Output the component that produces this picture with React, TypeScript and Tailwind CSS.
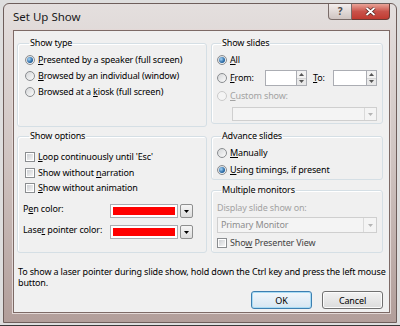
import React from 'react';

// Set Up Show dialog (Windows 7 style)

const Arrow = ({ color = '#000' }: { color?: string }) => (
  <svg width="5" height="3" viewBox="0 0 5 3">
    <path d="M0 0h5L2.5 3z" fill={color} />
  </svg>
);

const U = ({ children }: { children: React.ReactNode }) => <span className="underline underline-offset-1">{children}</span>;

const Radio = ({ checked, disabled, children }: { checked?: boolean; disabled?: boolean; children: React.ReactNode }) => (
  <div className={`flex items-center gap-[3px] ${disabled ? 'text-[#a3a3a3]' : 'text-black'}`}>
    <div
      className={`w-[10px] h-[10px] rounded-full border flex items-center justify-center ${disabled ? 'border-[#cacaca] bg-[#f4f4f4]' : 'border-[#8a8d90] bg-gradient-to-br from-[#d4d6d8] to-[#fbfbfb]'}`}
    >
      {checked && <div className="w-[6px] h-[6px] rounded-full bg-[radial-gradient(circle_at_35%_35%,#a8d6f7,#2a6aa6_60%,#174a7c)]" />}
    </div>
    <span>{children}</span>
  </div>
);

const Checkbox = ({ children }: { children: React.ReactNode }) => (
  <div className="flex items-center gap-[3px]">
    <div className="w-[10px] h-[10px] border border-[#8a8d90] bg-white p-[1px]">
      <div className="w-full h-full bg-gradient-to-br from-[#cdd0d4] to-[#f5f5f5]" />
    </div>
    <span>{children}</span>
  </div>
);

const Group = ({ title, className, children }: { title: string; className: string; children: React.ReactNode }) => (
  <fieldset className={`border border-[#d5dfe5] rounded-[3px] shadow-[inset_1px_1px_0_#fff] ${className}`}>
    <legend className="ml-[4px] px-[1px] leading-[12px]">{title}</legend>
    {children}
  </fieldset>
);

const Spin = ({ w }: { w: string }) => (
  <div className="flex h-[16px]">
    <div className={`${w} h-full bg-white border border-[#abadb3]`} />
    <div className="w-[10px] h-full border border-l-0 border-[#abadb3] flex flex-col">
      <div className="flex-1 flex items-center justify-center bg-[#f2f2f2] border-b border-[#d6d6d6]">
        <svg width="5" height="3" viewBox="0 0 5 3"><path d="M0 3h5L2.5 0z" fill="#555" /></svg>
      </div>
      <div className="flex-1 flex items-center justify-center bg-[#e8e8e8]">
        <Arrow color="#555" />
      </div>
    </div>
  </div>
);

const ColorPick = () => (
  <div className="flex gap-[2px] h-[14px]">
    <div className="w-[68px] h-full bg-white border border-[#abadb3] p-[2px]">
      <div className="w-full h-full bg-[#ff0000]" />
    </div>
    <div className="w-[13px] h-full border border-[#8e8f8f] rounded-[2px] bg-gradient-to-b from-[#f6f6f6] to-[#dcdcdc] flex items-center justify-center">
      <Arrow />
    </div>
  </div>
);

export default function App() {
  return (
    <div className="w-[400px] h-[326px] bg-[#dedede] pt-[3px] pl-[3px] font-['Noto_Sans',sans-serif] text-[9px] tracking-[-0.15px] text-black border-b border-[#3a3a3a]">
      <div className="w-[394px] h-[320px] rounded-t-[6px] border border-[#6e5e5b] bg-gradient-to-b from-[#e4dfde] via-[#cfc3c0] to-[#b29e9a] flex flex-col pl-[9px] pr-[6px] pb-[9px]">
        {/* title bar */}
        <div className="h-[26px] shrink-0 flex items-start justify-between">
          <div className="pt-[6px] text-[11.5px] tracking-normal leading-[14px] text-[#1a1a1a]">Set Up Show</div>
          <div className="flex">
            <div className="w-[24px] h-[16px] rounded-bl-[4px] border border-t-0 border-[#7a6c69] bg-gradient-to-b from-[#f3eeed] to-[#cfc4c1] flex items-center justify-center text-[10px] font-bold text-[#4a4a4a]">
              ?
            </div>
            <div className="w-[38px] h-[16px] rounded-br-[4px] border border-t-0 border-l-0 border-[#6b3b35] bg-gradient-to-b from-[#e8a397] via-[#c9524a] to-[#c03a30] flex items-center justify-center">
              <svg width="11" height="9" viewBox="0 0 11 9">
                <path d="M1.5 1l8 7M9.5 1l-8 7" stroke="#4a1d18" strokeWidth="3.2" />
                <path d="M1.5 1l8 7M9.5 1l-8 7" stroke="#fff" strokeWidth="1.8" />
              </svg>
            </div>
          </div>
        </div>

        {/* client area */}
        <div className="flex-1 min-h-0 bg-[#f0f0f0] border border-[#7d6a66] shadow-[0_0_0_1px_#e3d8d6] pl-[3px] pr-[6px] pt-[6px] flex flex-col">
          <div className="flex gap-[4px]">
            <Group title="Show type" className="w-[190px] h-[90px] pl-[7px]">
              <div className="pt-[3px] flex flex-col">
                <div className="h-[16px] flex items-center"><Radio checked><U>P</U>resented by a speaker (full screen)</Radio></div>
                <div className="h-[16px] flex items-center"><Radio><U>B</U>rowsed by an individual (window)</Radio></div>
                <div className="h-[16px] flex items-center"><Radio>Browsed at a <U>k</U>iosk (full screen)</Radio></div>
              </div>
            </Group>
            <Group title="Show slides" className="w-[172px] h-[87px] pl-[5px]">
              <div className="pt-[3px] flex flex-col">
                <div className="h-[16px] flex items-center"><Radio checked><U>A</U>ll</Radio></div>
                <div className="h-[18px] mt-[1px] flex items-center">
                  <div className="w-[48px]"><Radio><U>F</U>rom:</Radio></div>
                  <Spin w="w-[32px]" />
                  <span className="ml-[6px] w-[20px]"><U>T</U>o:</span>
                  <Spin w="w-[34px]" />
                </div>
                <div className="h-[16px] mt-[1px] flex items-center"><Radio disabled><U>C</U>ustom show:</Radio></div>
                <div className="ml-[15px] mt-[3px] w-[145px] h-[14px] border border-[#cfcfcf] bg-[#f4f4f4] flex justify-end">
                  <div className="w-[12px] h-full border-l border-[#dadada] flex items-center justify-center">
                    <Arrow color="#b5b5b5" />
                  </div>
                </div>
              </div>
            </Group>
          </div>

          <div className="flex gap-[4px] mt-[3px]">
            <Group title="Show options" className="w-[190px] h-[123px] pl-[7px]">
              <div className="pt-[7px] flex flex-col">
                <div className="h-[16px] flex items-center"><Checkbox><U>L</U>oop continuously until 'Esc'</Checkbox></div>
                <div className="h-[15px] flex items-center"><Checkbox>Show without <U>n</U>arration</Checkbox></div>
                <div className="h-[16px] flex items-center"><Checkbox><U>S</U>how without animation</Checkbox></div>
                <div className="h-[14px] mt-[8px] flex items-start -ml-[2px]">
                  <span className="w-[87px] leading-[10px]">P<U>e</U>n color:</span>
                  <ColorPick />
                </div>
                <div className="h-[14px] mt-[7px] flex items-start -ml-[2px]">
                  <span className="w-[87px] leading-[10px]">Lase<U>r</U> pointer color:</span>
                  <ColorPick />
                </div>
              </div>
            </Group>
            <div className="flex flex-col">
              <Group title="Advance slides" className="w-[172px] h-[50px] pl-[5px]">
                <div className="pt-[3px] flex flex-col">
                  <div className="h-[16px] flex items-center"><Radio><U>M</U>anually</Radio></div>
                  <div className="h-[16px] mt-[1px] flex items-center"><Radio checked><U>U</U>sing timings, if present</Radio></div>
                </div>
              </Group>
              <Group title="Multiple monitors" className="w-[172px] h-[69px] mt-[4px] pl-[5px]">
                <div className="pt-[5px] flex flex-col">
                  <div className="h-[14px] flex items-center text-[#a3a3a3]">Display slide show on:</div>
                  <div className="mt-[2px] w-[160px] h-[16px] border border-[#cfcfcf] bg-[#f4f4f4] flex items-center justify-between pl-[3px] text-[#8d8d8d]">
                    <span>Primary Monitor</span>
                    <div className="w-[13px] h-full border-l border-[#dadada] flex items-center justify-center">
                      <Arrow color="#b5b5b5" />
                    </div>
                  </div>
                  <div className="h-[14px] mt-[3px] flex items-center text-[#444]"><Checkbox>Sho<U>w</U> Presenter View</Checkbox></div>
                </div>
              </Group>
            </div>
          </div>

          <div className="mt-[13px] pl-[1px] leading-[11px] whitespace-nowrap">
            To show a laser pointer during slide show, hold down the Ctrl key and press the left mouse
            <br />
            button.
          </div>

          <div className="mt-[3px] flex justify-end gap-[10px]">
            <button type="button" className="w-[61px] h-[18px] rounded-[3px] border border-[#3c7fb1] shadow-[inset_0_0_0_1px_#a9dcf5] bg-gradient-to-b from-[#f2f7fb] to-[#d6e6f2] leading-none">
              OK
            </button>
            <button type="button" className="w-[61px] h-[18px] rounded-[3px] border border-[#707070] shadow-[inset_0_0_0_1px_#fbfbfb] bg-gradient-to-b from-[#f2f2f2] to-[#dcdcdc] leading-none">
              Cancel
            </button>
          </div>
        </div>
      </div>
    </div>
  );
}
